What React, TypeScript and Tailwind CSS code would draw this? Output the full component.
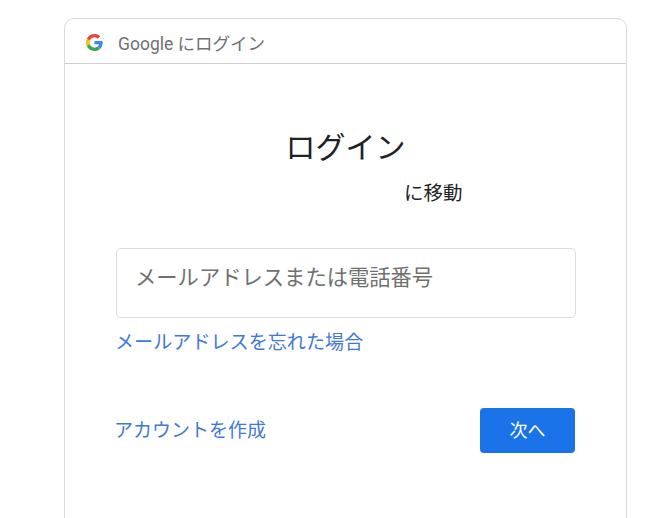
export default function App() {
  return (
    <div className="h-[518px] w-[671px] overflow-hidden bg-white pl-[64px] pt-[18px] font-['Roboto','Noto_Sans_CJK_JP',sans-serif]">
      <div className="h-[560px] w-[563px] rounded-t-[10px] border border-[#d8dadd]">
        <div className="flex h-[45px] items-center gap-[15px] border-b border-[#d0d0d0] pl-[21px] pt-[2px]">
          <svg width="17" height="17" viewBox="0 0 48 48">
            <path fill="#EA4335" d="M24 9.5c3.54 0 6.71 1.22 9.21 3.6l6.85-6.85C35.9 2.38 30.47 0 24 0 14.62 0 6.51 5.38 2.56 13.22l7.98 6.19C12.43 13.72 17.74 9.5 24 9.5z" />
            <path fill="#4285F4" d="M46.98 24.55c0-1.57-.15-3.09-.38-4.55H24v9.02h12.94c-.58 2.96-2.26 5.48-4.78 7.18l7.73 6c4.51-4.18 7.09-10.36 7.09-17.65z" />
            <path fill="#FBBC05" d="M10.53 28.59c-.48-1.45-.76-2.99-.76-4.59s.27-3.14.76-4.59l-7.98-6.19C.92 16.46 0 20.12 0 24c0 3.88.92 7.54 2.56 10.78l7.97-6.19z" />
            <path fill="#34A853" d="M24 48c6.48 0 11.93-2.13 15.89-5.81l-7.73-6c-2.15 1.45-4.92 2.3-8.16 2.3-6.26 0-11.57-4.22-13.47-9.91l-7.98 6.19C6.51 42.62 14.62 48 24 48z" />
          </svg>
          <span className="relative top-[2px] text-[17.5px] text-[#707070]">Google にログイン</span>
        </div>
        <div className="px-[51px]">
          <h1 className="mt-[62px] text-center text-[30px] leading-[44px] font-normal text-[#202124]">ログイン</h1>
          <p className="mt-[11px] pl-[288px] text-[19.5px] leading-[26px] text-[#202124]">に移動</p>
          <div className="mt-[41px] flex h-[70px] w-[460px] items-start rounded-[5px] border border-[#dadce0] px-[18px] pt-[14px] text-[21.3px] leading-[30px] text-[#707070]">
            メールアドレスまたは電話番号
          </div>
          <a className="mt-[12px] -ml-[1px] block text-[19.1px] leading-[26px] text-[#3f78d8]">メールアドレスを忘れた場合</a>
          <div className="mt-[52px] flex w-[459px] items-center justify-between">
            <a className="-ml-[2px] text-[19px] leading-[26px] text-[#3f78d8]">アカウントを作成</a>
            <button className="h-[45px] w-[95px] rounded-[4px] bg-[#1a73e8] text-[18px] text-white">次へ</button>
          </div>
        </div>
      </div>
    </div>
  );
}
